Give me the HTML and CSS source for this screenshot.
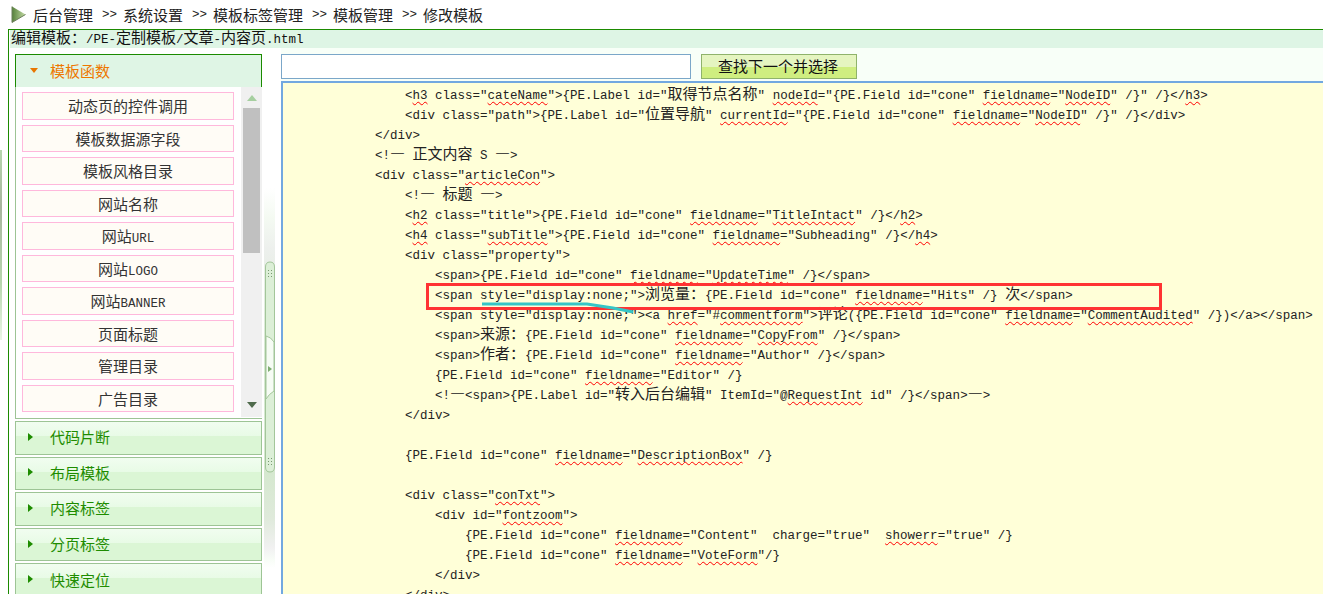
FILE: index.html
```html
<!DOCTYPE html>
<html lang="zh-CN">
<head>
<meta charset="utf-8">
<title>修改模板</title>
<link rel="stylesheet" href="styles.css">
</head>
<body>
<div class="edge"></div>
<header class="crumbs">
  <svg class="crumb-icon" width="15" height="17" viewBox="0 0 15 17">
    <defs><linearGradient id="ic" x1="0" x2="1" y1="0" y2="0"><stop offset="0" stop-color="#55803a"/><stop offset="1" stop-color="#c4dca6"/></linearGradient></defs>
    <path d="M1 0.5 L14.5 8.5 L1 16.5 Z" fill="url(#ic)"/>
    <path d="M1 0.5 V16.5 L14.5 8.5" fill="none" stroke="#6d7f5c" stroke-width="1"/>
  </svg>
  <span>后台管理</span><span class="sep">&gt;&gt;</span><span>系统设置</span><span class="sep">&gt;&gt;</span><span>模板标签管理</span><span class="sep">&gt;&gt;</span><span>模板管理</span><span class="sep">&gt;&gt;</span><span>修改模板</span>
</header>
<div class="panel">
  <div class="panel-title mono"><span class="c">编辑模板：</span>/PE-<span class="c">定制模板</span>/<span class="c">文章</span>-<span class="c">内容页</span>.html</div>
  <div class="panel-body">
    <aside class="sidebar">
      <div class="acc-open"><i class="tri-down"></i><span>模板函数</span></div>
      <div class="list-wrap">
        <div class="list">
          <div class="item">动态页的控件调用</div>
          <div class="item">模板数据源字段</div>
          <div class="item">模板风格目录</div>
          <div class="item">网站名称</div>
          <div class="item">网站<span class="m">URL</span></div>
          <div class="item">网站<span class="m">LOGO</span></div>
          <div class="item">网站<span class="m">BANNER</span></div>
          <div class="item">页面标题</div>
          <div class="item">管理目录</div>
          <div class="item">广告目录</div>
        </div>
        <div class="scroll">
          <div class="scroll-btn"><i class="sc-up"></i></div>
          <div class="thumb"></div>
          <div class="scroll-rest"><i class="sc-down"></i></div>
        </div>
      </div>
      <div class="acc"><i class="tri-right"></i><span>代码片断</span></div>
      <div class="acc"><i class="tri-right"></i><span>布局模板</span></div>
      <div class="acc"><i class="tri-right"></i><span>内容标签</span></div>
      <div class="acc"><i class="tri-right"></i><span>分页标签</span></div>
      <div class="acc"><i class="tri-right"></i><span>快速定位</span></div>
    </aside>
    <div class="splitter">
      <svg class="handle" width="12" height="216" viewBox="0 0 12 216">
        <path d="M1.5 6 Q1.5 1 6 1 Q10.5 1 10.5 6 V206 Q10.5 211 6 211 Q1.5 211 1.5 206 Z" fill="#dcefd7" stroke="#a3c69a"/>
        <path d="M2 75 Q7 76 10 81 V130 Q5 133 2 138 Z" fill="#f6fcf4" stroke="#a3c69a"/>
        <path d="M4 105 L8 108 L4 111 Z" fill="#7fae72"/>
        <path d="M4 9 h1 v1 h-1z M7 9 h1 v1 h-1z M4 12 h1 v1 h-1z M7 12 h1 v1 h-1z M4 15 h1 v1 h-1z M7 15 h1 v1 h-1z M4 197 h1 v1 h-1z M7 197 h1 v1 h-1z M4 200 h1 v1 h-1z M7 200 h1 v1 h-1z M4 203 h1 v1 h-1z M7 203 h1 v1 h-1z" fill="#7a9a72"/>
      </svg>
    </div>
    <main class="main">
      <div class="search">
        <input class="search-input" type="text" aria-label="查找">
        <button class="search-btn" type="button">查找下一个并选择</button>
      </div>
      <div class="editor mono">
<div class="line">    &lt;<span class="s">h3</span> class="<span class="s">cateName</span>"&gt;{PE.Label id="<span class="c">取得节点名称</span>" <span class="s">nodeId</span>="{PE.Field id="cone" <span class="s">fieldname</span>="<span class="s">NodeID</span>" /}" /}&lt;/<span class="s">h3</span>&gt;</div>
<div class="line">    &lt;div class="path"&gt;{PE.Label id="<span class="c">位置导航</span>" <span class="s">currentId</span>="{PE.Field id="cone" <span class="s">fieldname</span>="<span class="s">NodeID</span>" /}" /}&lt;/div&gt;</div>
<div class="line">&lt;/div&gt;</div>
<div class="line">&lt;!<span class="c">—</span> <span class="c">正文内容</span> S <span class="c">—</span>&gt;</div>
<div class="line">&lt;div class="<span class="s">articleCon</span>"&gt;</div>
<div class="line">    &lt;!<span class="c">—</span> <span class="c">标题</span> <span class="c">—</span>&gt;</div>
<div class="line">    &lt;<span class="s">h2</span> class="title"&gt;{PE.Field id="cone" <span class="s">fieldname</span>="<span class="s">TitleIntact</span>" /}&lt;/<span class="s">h2</span>&gt;</div>
<div class="line">    &lt;<span class="s">h4</span> class="<span class="s">subTitle</span>"&gt;{PE.Field id="cone" <span class="s">fieldname</span>="Subheading" /}&lt;/<span class="s">h4</span>&gt;</div>
<div class="line">    &lt;div class="property"&gt;</div>
<div class="line">        &lt;span&gt;{PE.Field id="cone" <span class="s">fieldname</span>="<span class="s">UpdateTime</span>" /}&lt;/span&gt;</div>
<div class="line">        &lt;span style="display:none;"&gt;<span class="c">浏览量：</span>{PE.Field id="cone" <span class="s">fieldname</span>="Hits" /} <span class="c">次</span>&lt;/span&gt;</div>
<div class="line">        &lt;span style="display:none;"&gt;&lt;a <span class="s">href</span>="#<span class="s">commentform</span>"&gt;<span class="c">评论</span>({PE.Field id="cone" <span class="s">fieldname</span>="<span class="s">CommentAudited</span>" /})&lt;/a&gt;&lt;/span&gt;</div>
<div class="line">        &lt;span&gt;<span class="c">来源：</span>{PE.Field id="cone" <span class="s">fieldname</span>="<span class="s">CopyFrom</span>" /}&lt;/span&gt;</div>
<div class="line">        &lt;span&gt;<span class="c">作者：</span>{PE.Field id="cone" <span class="s">fieldname</span>="Author" /}&lt;/span&gt;</div>
<div class="line">        {PE.Field id="cone" <span class="s">fieldname</span>="Editor" /}</div>
<div class="line">        &lt;!<span class="c">—</span>&lt;span&gt;{PE.Label id="<span class="c">转入后台编辑</span>" ItemId="@<span class="s">RequestInt</span> id" /}&lt;/span&gt;<span class="c">—</span>&gt;</div>
<div class="line">    &lt;/div&gt;</div>
<div class="line"></div>
<div class="line">    {PE.Field id="cone" <span class="s">fieldname</span>="<span class="s">DescriptionBox</span>" /}</div>
<div class="line"></div>
<div class="line">    &lt;div class="<span class="s">conTxt</span>"&gt;</div>
<div class="line">        &lt;div id="<span class="s">fontzoom</span>"&gt;</div>
<div class="line">            {PE.Field id="cone" <span class="s">fieldname</span>="Content"  charge="true"  <span class="s">showerr</span>="true" /}</div>
<div class="line">            {PE.Field id="cone" <span class="s">fieldname</span>="<span class="s">VoteForm</span>"/}</div>
<div class="line">        &lt;/div&gt;</div>
<div class="line">    &lt;/div&gt;</div>
        <div class="red-box"></div>
        <svg class="scribble" width="170" height="20" viewBox="0 0 170 20">
          <path d="M1 3 H106 L132 7 L152 11" fill="none" stroke="#35c6c6" stroke-width="3"/>
        </svg>
      </div>
    </main>
  </div>
</div>
</body>
</html>
```
FILE: styles.css
```css
html, body {
  margin: 0;
  height: 100%;
  overflow: hidden;
  background: #fff;
}
body {
  display: flex;
  flex-direction: column;
  font-family: "Noto Sans CJK SC", "Liberation Sans", sans-serif;
  font-size: 15px;
  color: #222;
  position: relative;
}
.edge {
  position: absolute;
  left: 0;
  top: 150px;
  width: 2px;
  height: 190px;
  background: linear-gradient(#b7d6ae, #a8b59e 30%, #b7d6ae 70%, #eaf5e6);
}
.crumbs {
  height: 29px;
  flex: none;
  display: flex;
  align-items: center;
  padding-left: 11px;
  box-sizing: border-box;
  line-height: 20px;
}
.crumb-icon {
  margin-right: 7px;
  flex: none;
}
.sep {
  width: 15px;
  padding: 0 6px 0 9px;
  font-family: "Liberation Mono", monospace;
  font-size: 12.5px;
}
.panel {
  flex: 1;
  min-height: 0;
  margin-left: 8px;
  border-top: 1px solid #1b8a00;
  border-left: 1px solid #1b8a00;
  display: flex;
  flex-direction: column;
}
.panel-title {
  height: 18px;
  line-height: 21px;
  flex: none;
  margin-left: 1px;
  padding-left: 1px;
  background: #def5e5;
  white-space: pre;
  color: #111;
}
.mono {
  font-family: "Liberation Mono", monospace;
  font-size: 12.5px;
}
.c {
  font-family: "Noto Sans CJK SC", sans-serif;
  font-size: 15px;
  line-height: 0;
}
.m {
  font-family: "Liberation Mono", monospace;
  font-size: 12.5px;
  line-height: 0;
}
.s {
  text-decoration: underline wavy #f00 1px;
  text-decoration-skip-ink: none;
  text-underline-offset: 2px;
}
.panel-body {
  flex: 1;
  min-height: 0;
  display: flex;
}
.sidebar {
  width: 247px;
  flex: none;
  margin-left: 6px;
  padding-top: 6px;
  display: flex;
  flex-direction: column;
  gap: 2px;
}
.acc-open {
  height: 33px;
  box-sizing: border-box;
  flex: none;
  margin-bottom: -2px;
  display: flex;
  align-items: center;
  padding: 0 0 2px 11px;
  border: 1px solid #1b8a00;
  border-bottom: 0;
  background: #dff5e5;
  color: #ee7700;
}
.tri-down {
  width: 0;
  height: 0;
  border-left: 4.5px solid transparent;
  border-right: 4.5px solid transparent;
  border-top: 5px solid #e87600;
  margin: 1px 12px 0 3px;
}
.list-wrap {
  height: 332px;
  flex: none;
  box-sizing: border-box;
  display: flex;
  justify-content: space-between;
  border-left: 1px solid #9dc495;
  border-bottom: 1px solid #9dc495;
}
.list {
  width: 212px;
  margin-left: 6px;
  padding-top: 5px;
  display: flex;
  flex-direction: column;
  gap: 5px;
}
.item {
  height: 27.5px;
  box-sizing: border-box;
  border: 1px solid #ffb8dc;
  background: #fffcf6;
  text-align: center;
  line-height: 25px;
  color: #333;
}
.scroll {
  width: 21px;
  height: 330px;
  background: #f0f0f0;
  display: flex;
  flex-direction: column;
  align-items: center;
}
.scroll-btn {
  height: 21px;
  flex: none;
  display: flex;
  align-items: center;
  justify-content: center;
}
.sc-up {
  width: 0;
  height: 0;
  border-left: 5px solid transparent;
  border-right: 5px solid transparent;
  border-bottom: 6px solid #a6cfa0;
}
.thumb {
  width: 17px;
  height: 145px;
  background: #c0c0c0;
  flex: none;
}
.scroll-rest {
  flex: 1;
  display: flex;
  align-items: flex-end;
  padding-bottom: 9px;
}
.sc-down {
  width: 0;
  height: 0;
  border-left: 5px solid transparent;
  border-right: 5px solid transparent;
  border-top: 6px solid #4f6a4c;
}
.acc {
  height: 33.6px;
  flex: none;
  box-sizing: border-box;
  display: flex;
  align-items: center;
  padding: 0 0 2px 12px;
  border: 1px solid #9dc495;
  background: linear-gradient(#f1fdf0 0, #e8fbe6 45%, #dbf6d5 45%, #dbf6d5 100%);
  color: #1e8c00;
}
.tri-right {
  width: 0;
  height: 0;
  border-top: 4.5px solid transparent;
  border-bottom: 4.5px solid transparent;
  border-left: 5px solid #1e8c00;
  margin: 0 17px 0 0;
}
.splitter {
  width: 19px;
  flex: none;
  position: relative;
  background: linear-gradient(to right, #fff 2px, transparent 2px, transparent 13px, #fff 13px),
    linear-gradient(#fff 140px, #f4faf2 170px, #edf0ed 200px, #d8e9d3 300px, #d5e8cf 425px, #dfeadb 470px, #f1f1f1 500px, #f8fdf7 512px, #fff 520px);
}
.handle {
  position: absolute;
  left: 2px;
  top: 213px;
}
.main {
  flex: 1;
  min-width: 0;
  display: flex;
  flex-direction: column;
  background: #f8fff8;
}
.search {
  height: 33px;
  flex: none;
  box-sizing: border-box;
  padding-top: 6px;
  display: flex;
  align-items: flex-start;
  gap: 10px;
}
.search-input {
  width: 410px;
  height: 25px;
  box-sizing: border-box;
  margin: 0;
  padding: 0;
  border: 1px solid #7ba7c9;
  background: #fff;
}
.search-btn {
  width: 156px;
  height: 25px;
  box-sizing: border-box;
  margin: 0;
  padding: 0 2px 2px 0;
  border: 1px solid #8fb36b;
  background: linear-gradient(#e5f5c0 50%, #cfee80 50%);
  font: 15px/20px "Noto Sans CJK SC", sans-serif;
  color: #111;
}
.editor {
  flex: 1;
  min-height: 0;
  position: relative;
  overflow: hidden;
  box-sizing: border-box;
  border-top: 2px solid #72a8e0;
  border-left: 2px solid #72a8e0;
  padding: 3px 0 0 92px;
  background: #ffffd8;
  color: #222;
}
.line {
  height: 20px;
  line-height: 20px;
  white-space: pre;
}
.red-box {
  position: absolute;
  left: 143px;
  top: 200px;
  width: 736px;
  height: 27px;
  box-sizing: border-box;
  border: 3px solid #ff3333;
}
.scribble {
  position: absolute;
  left: 198px;
  top: 218px;
}
```
